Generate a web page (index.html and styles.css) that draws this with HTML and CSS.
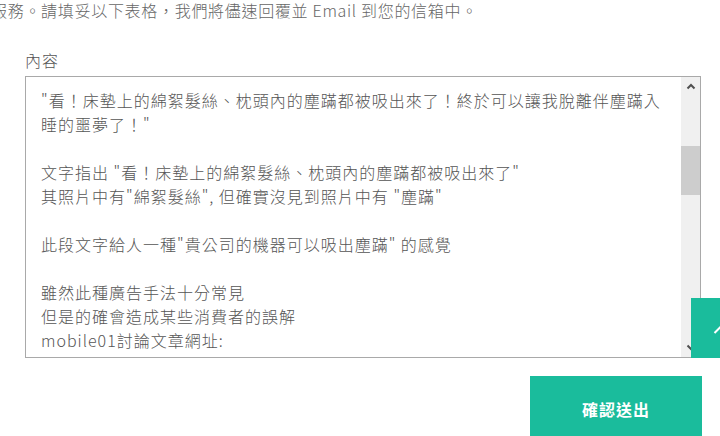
FILE: index.html
```html
<!DOCTYPE html>
<html lang="zh-Hant">
<head>
<meta charset="utf-8">
<title>聯絡我們</title>
<link rel="stylesheet" href="styles.css">
</head>
<body>
<div class="page">
  <p class="intro">服務。請填妥以下表格，我們將儘速回覆並 Email 到您的信箱中。</p>
  <form class="form">
    <label class="label">內容</label>
    <div class="textarea">
      <div class="text">"看！床墊上的綿絮髮絲、枕頭內的塵蹣都被吸出來了！終於可以讓我脫離伴塵蹣入睡的噩夢了！"

文字指出 "看！床墊上的綿絮髮絲、枕頭內的塵蹣都被吸出來了"
其照片中有"綿絮髮絲", 但確實沒見到照片中有 "塵蹣"

此段文字給人一種"貴公司的機器可以吸出塵蹣" 的感覺

雖然此種廣告手法十分常見
但是的確會造成某些消費者的誤解
mobile01討論文章網址:
https://www.mobile01.com/</div>
      <div class="scrollbar">
        <div class="sb-btn">
          <svg width="10" height="7" viewBox="0 0 10 7"><polyline points="1.5,5.5 5,2 8.5,5.5" fill="none" stroke="#505050" stroke-width="2"/></svg>
        </div>
        <div class="sb-track">
          <div class="sb-thumb"></div>
        </div>
        <div class="sb-btn">
          <svg width="10" height="7" viewBox="0 0 10 7"><polyline points="1.5,1.5 5,5 8.5,1.5" fill="none" stroke="#505050" stroke-width="2"/></svg>
        </div>
      </div>
    </div>
    <div class="actions">
      <button type="button" class="submit">確認送出</button>
    </div>
  </form>
</div>
<a class="to-top" href="#">
  <svg width="60" height="60" viewBox="0 0 60 60"><polyline points="23.5,35 30,28.5 36.5,35" fill="none" stroke="#ffffff" stroke-width="2"/></svg>
</a>
</body>
</html>
```

FILE: styles.css
```css
* { box-sizing: border-box; }

html, body {
  margin: 0;
  padding: 0;
  background: #ffffff;
  overflow: hidden;
}

body {
  font-family: "Noto Sans CJK TC", "Noto Sans", sans-serif;
  font-weight: 300;
  color: #555555;
  width: 720px;
  height: 436px;
}

.page {
  width: 720px;
}

.intro {
  margin: 0 0 0 -9px;
  font-size: 16px;
  line-height: 20px;
  letter-spacing: 0.7px;
  color: #666666;
  white-space: nowrap;
}

.form {
  display: flex;
  flex-direction: column;
  padding-left: 25px;
  margin: 0;
}

.label {
  margin-top: 30px;
  font-size: 16px;
  line-height: 20px;
  color: #555555;
  letter-spacing: 1px;
}

.textarea {
  margin-top: 6px;
  width: 676px;
  height: 282px;
  border: 1px solid #a9a9a9;
  display: flex;
  overflow: hidden;
  background: #ffffff;
}

.text {
  flex: 1;
  padding: 11px 18px 0 15px;
  font-size: 16px;
  line-height: 24px;
  letter-spacing: 1px;
  color: #555555;
  white-space: pre-line;
  overflow: hidden;
}

.scrollbar {
  width: 19px;
  flex: none;
  display: flex;
  flex-direction: column;
  background: #f0f0f0;
}

.sb-btn {
  height: 19px;
  display: flex;
  align-items: center;
  justify-content: center;
}

.sb-track {
  flex: 1;
  padding-top: 50px;
}

.sb-thumb {
  height: 49px;
  background: #cdcdcd;
}

.actions {
  display: flex;
  justify-content: flex-end;
  width: 677px;
  margin-top: 18px;
}

.submit {
  width: 172px;
  height: 68px;
  border: none;
  background: #1abc9c;
  color: #ffffff;
  font-family: "Noto Sans CJK TC", "Noto Sans", sans-serif;
  font-size: 16px;
  font-weight: bold;
  letter-spacing: 1px;
  padding: 0 0 2px 0;
}

.to-top {
  position: fixed;
  left: 691px;
  top: 298px;
  width: 60px;
  height: 60px;
  background: #1abc9c;
  display: block;
}

.to-top svg {
  display: block;
}
```
